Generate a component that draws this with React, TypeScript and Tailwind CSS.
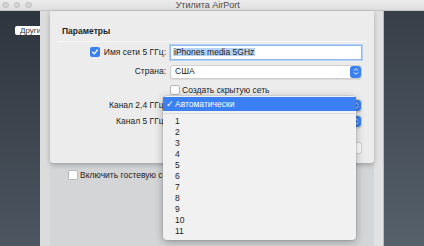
import React from "react";

const font = "font-['Liberation_Sans','Arial',sans-serif]";

function Stepper() {
  return (
    <div className="w-[11px] h-full rounded-[3px] bg-[#3a80f3] flex items-center justify-center shrink-0">
      <svg width="6" height="9" viewBox="0 0 6 9" fill="none">
        <path
          d="M1.2 3.4 3 1.6 4.8 3.4M1.2 5.6 3 7.4 4.8 5.6"
          stroke="white"
          strokeWidth="0.9"
          strokeLinecap="round"
          strokeLinejoin="round"
        />
      </svg>
    </div>
  );
}

function Select({ value, h }: { value?: string; h: string }) {
  return (
    <div
      className={
        "flex items-center justify-between bg-white border border-[#cfcfcf] rounded-[3px] shadow-[0_0.5px_0.5px_rgba(0,0,0,0.15)] " +
        h
      }
    >
      <span className="pl-[4px] text-[8.5px] text-[#1e1e1e] leading-none">
        {value}
      </span>
      <Stepper />
    </div>
  );
}

function Check({ on }: { on?: boolean }) {
  if (on)
    return (
      <div className="w-[10px] h-[10px] rounded-[2px] bg-[#3a80f3] flex items-center justify-center shrink-0">
        <svg width="8" height="8" viewBox="0 0 8 8" fill="none">
          <path
            d="M1.6 4.2 3.3 5.9 6.4 2"
            stroke="white"
            strokeWidth="1.3"
            strokeLinecap="round"
            strokeLinejoin="round"
          />
        </svg>
      </div>
    );
  return (
    <div className="w-[10px] h-[10px] rounded-[2px] bg-white border border-[#b9b9b9] shrink-0" />
  );
}

export default function App() {
  const channels = ["1", "2", "3", "4", "5", "6", "7", "8", "9", "10", "11"];
  return (
    <div
      className={
        "relative w-[424px] h-[246px] overflow-hidden flex flex-col bg-[#d5d6d8] " +
        font
      }
    >
      {/* title bar */}
      <div className="relative h-[11px] shrink-0 bg-gradient-to-b from-[#ececec] to-[#dedede] border-b border-[#c4c4c4] flex items-center">
        <div className="flex gap-[5px] pl-[2px]">
          <div className="w-[6.5px] h-[6.5px] rounded-full bg-[#d4d4d4] border border-[#c2c2c2]" />
          <div className="w-[6.5px] h-[6.5px] rounded-full bg-[#d4d4d4] border border-[#c2c2c2]" />
          <div className="w-[6.5px] h-[6.5px] rounded-full bg-[#d4d4d4] border border-[#c2c2c2]" />
        </div>
        <div className="flex-1 text-center text-[9px] text-[#4a4a4a] leading-none pr-[40px]">
          Утилита AirPort
        </div>
      </div>

      <div className="flex flex-1 min-h-0">
        {/* left dark panel */}
        <div className="w-[40px] shrink-0 overflow-hidden bg-gradient-to-b from-[#2f353e] to-[#4d5661]">
          <div className="mt-[15px] ml-[15px] w-[32px] h-[9px] bg-white rounded-[2px] text-[8px] leading-[9px] text-[#333] pl-[5px] whitespace-nowrap">
            Другие
          </div>
        </div>

        {/* main window content */}
        <div className="relative flex-1 flex bg-[#d4d5d7]">
          <div className="w-[10px] bg-[#dcdcdd]" />
          <div className="flex-1 pt-[159px] pl-[18px]">
            <div className="flex items-center gap-[2px]">
              <Check />
              <span className="text-[8.5px] text-[#222] leading-none whitespace-nowrap">
                Включить гостевую сеть
              </span>
            </div>
          </div>
          <div className="w-[10px] bg-[#e1e1e2] border-r border-[#b9bbbe]" />

          {/* sheet */}
          <div className="absolute left-[10px] right-[10px] top-0 h-[152px] bg-[#ececec] rounded-b-[3px] shadow-[0_2px_5px_rgba(0,0,0,0.25)]">
            <div className="pl-[12px] pt-[16px] text-[8.5px] font-bold text-[#1e1e1e] leading-none">
              Параметры
            </div>
            <div className="mx-[7px] mt-[5px] border-t border-[#f7f7f7]" />
            <div className="grid grid-cols-[116px_1fr] gap-x-[4px] pr-[12px] pt-[3px] text-[8.5px] text-[#222] leading-none">
              <div className="h-[15px] flex items-center justify-end gap-[4px]">
                <Check on />
                <span>Имя сети 5 ГГц:</span>
              </div>
              <div className="h-[15px] bg-white border border-[#8fb6ef] shadow-[0_0_0_1px_#b7d1f6] flex items-center pl-[2px]">
                <span className="bg-[#b5d3fb] text-[#1a1a1a] px-[1px]">
                  iPhones media 5GHz
                </span>
              </div>

              <div className="h-[14px] mt-[5px] flex items-center justify-end">
                Страна:
              </div>
              <div className="mt-[5px]">
                <Select value="США" h="h-[14px]" />
              </div>

              <div />
              <div className="mt-[7px] h-[9px] flex items-center gap-[2px]">
                <Check />
                <span>Создать скрытую сеть</span>
              </div>

              <div className="h-[13px] mt-[4px] flex items-center justify-end whitespace-nowrap">
                Канал 2,4 ГГц:
              </div>
              <div className="mt-[4px]">
                <Select h="h-[13px]" />
              </div>

              <div className="h-[13px] mt-[3px] flex items-center justify-end whitespace-nowrap">
                Канал 5 ГГц:
              </div>
              <div className="mt-[3px]">
                <Select h="h-[13px]" />
              </div>

              <div />
              <div className="mt-[14px] flex justify-end">
                <div className="w-[60px] h-[12px] bg-white border border-[#cfcfcf] rounded-[3px]" />
              </div>
            </div>
          </div>
        </div>

        {/* right dark panel */}
        <div className="w-[40px] shrink-0 bg-gradient-to-b from-[#383f49] to-[#56616c]" />
      </div>

      {/* popup menu */}
      <div className="absolute left-[163px] top-[96px] w-[193px] h-[144px] bg-[#f1f1f1] rounded-[4px] shadow-[0_2px_8px_rgba(0,0,0,0.3),0_0_0_0.5px_rgba(0,0,0,0.12)] pt-[1px] text-[8.5px] leading-none">
        <div className="h-[14px] bg-[#3a80f3] text-white flex items-center pl-[3px]">
          <span className="w-[9px]">✓</span>
          <span>Автоматически</span>
        </div>
        <div className="mt-[2px] mb-[2px] border-t border-[#dcdcdc]" />
        {channels.map((c) => (
          <div
            key={c}
            className="h-[11px] flex items-center pl-[12px] text-[#222]"
          >
            {c}
          </div>
        ))}
      </div>
    </div>
  );
}
